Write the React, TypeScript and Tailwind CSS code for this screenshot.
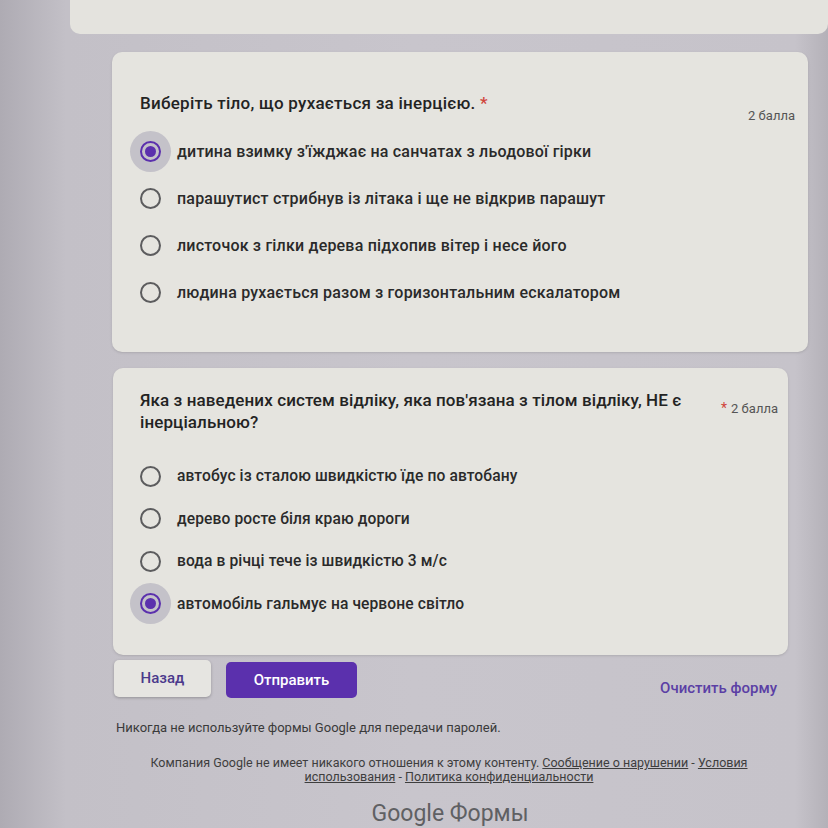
import React from "react";

function Radio({ selected }: { selected?: boolean }) {
  return (
    <div className="relative w-[21px] h-[21px] shrink-0">
      {selected && (
        <div className="absolute left-[-10px] top-[-10px] w-[41px] h-[41px] rounded-full bg-[#c4c2c9]" />
      )}
      <div
        className={
          selected
            ? "relative w-[21px] h-[21px] rounded-full border-2 border-[#5b30ad] flex items-center justify-center"
            : "relative w-[21px] h-[21px] rounded-full border-2 border-[#5c5c5e]"
        }
      >
        {selected && <div className="w-[11px] h-[11px] rounded-full bg-[#5b30ad]" />}
      </div>
    </div>
  );
}

function Option({ text, selected, h, size }: { text: string; selected?: boolean; h: string; size: string }) {
  return (
    <div className={`flex items-center gap-[16px] ${h}`}>
      <Radio selected={selected} />
      <span className={`${size} font-medium text-[#2a2a2a] leading-[20px]`}>{text}</span>
    </div>
  );
}

export default function App() {
  const s1 = "text-[16px] tracking-[0.2px]";
  const s2 = "text-[15.6px] tracking-[0.1px]";
  return (
    <div
      className="w-[828px] h-[828px] overflow-hidden bg-[linear-gradient(90deg,#aeabb3_0%,#c3c0c7_8%,#c8c5cc_50%,#c6c3ca_96%,#b4b1b8_100%)] font-['Roboto',sans-serif]"
    >
      {/* top card remainder */}
      <div className="ml-[70px] h-[34px] bg-[#e4e3de] rounded-b-[10px]" />

      {/* Card 1 */}
      <div className="ml-[112px] mt-[18px] w-[696px] h-[300px] rounded-[10px] bg-[#e5e4df] shadow-sm pl-[28px] pr-[13px] pt-[39px]">
        <div className="flex items-start justify-between">
          <div className="text-[17px] font-medium tracking-[0.25px] text-[#232323] leading-[24px]">
            Виберіть тіло, що рухається за інерцією. <span className="text-[#d0453b]">*</span>
          </div>
          <div className="mt-[17px] text-[13px] leading-[16px] text-[#555] ">2 балла</div>
        </div>
        <div className="mt-[4px] flex flex-col">
          <Option size={s1} h="h-[47px]" selected text="дитина взимку з'їжджає на санчатах з льодової гірки" />
          <Option size={s1} h="h-[47px]" text="парашутист стрибнув із літака і ще не відкрив парашут" />
          <Option size={s1} h="h-[47px]" text="листочок з гілки дерева підхопив вітер і несе його" />
          <Option size={s1} h="h-[47px]" text="людина рухається разом з горизонтальним ескалатором" />
        </div>
      </div>

      {/* Card 2 */}
      <div className="ml-[113px] mt-[16px] w-[675px] h-[287px] rounded-[10px] bg-[#e5e4df] shadow-sm pl-[27px] pr-[10px] pt-[21px]">
        <div className="flex items-start justify-between">
          <div className="text-[17px] font-medium tracking-[0.1px] text-[#232323] leading-[22px]">
            Яка з наведених систем відліку, яка пов'язана з тілом відліку, НЕ є
            <br />
            інерціальною?
          </div>
          <div className="pt-[11px] text-[13px] leading-[16px] text-[#555] whitespace-nowrap">
            <span className="text-[#d0453b] text-[14px] mr-[4px]">*</span>2 балла
          </div>
        </div>
        <div className="mt-[22px] flex flex-col">
          <Option size={s2} h="h-[42.5px]" text="автобус із сталою швидкістю їде по автобану" />
          <Option size={s2} h="h-[42.5px]" text="дерево росте біля краю дороги" />
          <Option size={s2} h="h-[42.5px]" text="вода в річці тече із швидкістю 3 м/с" />
          <Option size={s2} h="h-[42.5px]" selected text="автомобіль гальмує на червоне світло" />
        </div>
      </div>

      {/* Buttons */}
      <div className="ml-[114px] mt-[5px] flex items-start">
        <div className="w-[97px] h-[37px] rounded-[5px] bg-[#e6e5e1] shadow-[0_1px_3px_rgba(0,0,0,0.25)] flex items-center justify-center text-[15px] font-medium text-[#4b3a8c]">
          Назад
        </div>
        <div className="ml-[15px] mt-[2px] w-[131px] h-[36px] rounded-[5px] bg-[#5b30ad] flex items-center justify-center text-[15px] font-medium text-white">
          Отправить
        </div>
        <div className="ml-auto mr-[51px] pt-[18px] text-[15px] leading-[20px] font-medium text-[#5b3fa5]">
          Очистить форму
        </div>
      </div>

      <div className="ml-[116px] mt-[22px] text-[13px] leading-[16px] text-[#3a3a3a]">
        Никогда не используйте формы Google для передачи паролей.
      </div>

      <div className="ml-[100px] w-[698px] mt-[20px] text-center text-[12.5px] leading-[14px] text-[#3e3e3e]">
        Компания Google не имеет никакого отношения к этому контенту.{" "}
        <span className="underline">Сообщение о нарушении</span> - <span className="underline">Условия</span>
        <br />
        <span className="underline">использования</span> - <span className="underline">Политика конфиденциальности</span>
      </div>

      <div className="mt-[16px] text-center w-[900px] text-[23px] leading-[28px] text-[#5f6063]">
        Google Формы
      </div>
    </div>
  );
}
